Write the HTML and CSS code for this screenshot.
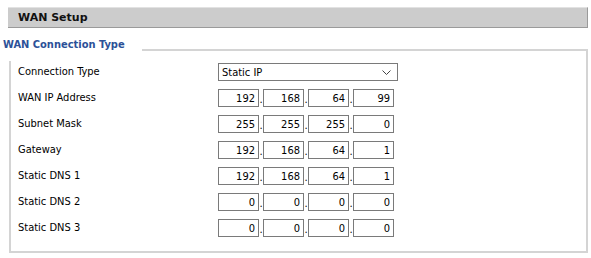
FILE: index.html
```html
<!DOCTYPE html>
<html lang="en">
<head>
<meta charset="UTF-8">
<title>WAN Setup</title>
<link rel="stylesheet" href="styles.css">
</head>
<body>

<div class="page">
    <div class="section-title">WAN Setup</div>

    <fieldset class="group">
        <legend>WAN Connection Type</legend>
        <div class="rows">
            <div class="label">Connection Type</div>
            <div class="select">
                <span>Static IP</span>
                <svg width="9" height="5" viewBox="0 0 9 5"><path d="M0.5 0.5 L4.5 4.5 L8.5 0.5" fill="none" stroke="#444" stroke-width="1"/></svg>
            </div>

            <div class="label">WAN IP Address</div>
            <div class="ip">
                <input value="192"><span class="dot">.</span><input value="168"><span class="dot">.</span><input value="64"><span class="dot">.</span><input value="99">
            </div>

            <div class="label">Subnet Mask</div>
            <div class="ip">
                <input value="255"><span class="dot">.</span><input value="255"><span class="dot">.</span><input value="255"><span class="dot">.</span><input value="0">
            </div>

            <div class="label">Gateway</div>
            <div class="ip">
                <input value="192"><span class="dot">.</span><input value="168"><span class="dot">.</span><input value="64"><span class="dot">.</span><input value="1">
            </div>

            <div class="label">Static DNS 1</div>
            <div class="ip">
                <input value="192"><span class="dot">.</span><input value="168"><span class="dot">.</span><input value="64"><span class="dot">.</span><input value="1">
            </div>

            <div class="label">Static DNS 2</div>
            <div class="ip">
                <input value="0"><span class="dot">.</span><input value="0"><span class="dot">.</span><input value="0"><span class="dot">.</span><input value="0">
            </div>

            <div class="label">Static DNS 3</div>
            <div class="ip">
                <input value="0"><span class="dot">.</span><input value="0"><span class="dot">.</span><input value="0"><span class="dot">.</span><input value="0">
            </div>
        </div>
    </fieldset>
</div>

</body>
</html>
```

FILE: styles.css
```css
body {
    margin: 0;
    padding: 0;
    background: #ffffff;
    color: #000000;
    font-family: "DejaVu Sans Condensed", "Liberation Sans", sans-serif;
    font-size: 11px;
}
.page {
    padding: 7px 3px 0 8px;
}
.section-title {
    height: 19px;
    line-height: 19px;
    padding-left: 10px;
    background-color: #cccccc;
    border-top: 1px solid #e2e2e2;
    border-right: 1px solid #9a9a9a;
    border-bottom: 1px solid #9a9a9a;
    font-family: "DejaVu Sans", sans-serif;
    font-weight: bold;
    font-size: 11px;
    color: #111111;
}
.group {
    margin: 10px 0 0 1px;
    padding: 0;
    border: 2px solid #d4d4d4;
}
.group legend {
    margin-left: -10px;
    padding: 0 17px 9px 2px;
    line-height: 14px;
    font-family: "DejaVu Sans Condensed", "DejaVu Sans", sans-serif;
    font-weight: bold;
    font-size: 11px;
    color: #2c5198;
}
.rows {
    display: grid;
    grid-template-columns: 200px auto;
    row-gap: 8px;
    padding: 2px 0 14px 7px;
    align-items: center;
}
.label {
    line-height: 18px;
}
.select {
    width: 180px;
    height: 18px;
    box-sizing: border-box;
    border: 1px solid #7a7a7a;
    display: flex;
    align-items: center;
    justify-content: space-between;
    padding: 0 6px 0 3px;
}
.ip {
    display: flex;
    align-items: flex-end;
}
.ip input {
    width: 41px;
    height: 18px;
    box-sizing: border-box;
    border: 1px solid #7a7a7a;
    margin: 0;
    padding: 0 3px 0 0;
    text-align: right;
    font-family: inherit;
    font-size: 11px;
    color: #000000;
    background: #ffffff;
}
.dot {
    width: 4px;
    text-align: center;
    line-height: 14px;
    color: #000000;
}
```
